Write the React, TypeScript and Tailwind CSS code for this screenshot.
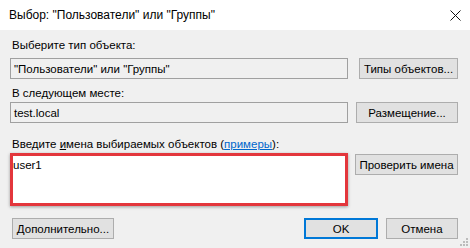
import React from "react";

const font = { fontFamily: '"Segoe UI", "Liberation Sans", Arial, sans-serif' };

function Btn({ children, className = "" }: { children: React.ReactNode; className?: string }) {
  return (
    <div
      className={`flex h-[21px] shrink-0 items-center justify-center whitespace-nowrap border border-[#adadad] bg-[#e1e1e1] text-black ${className}`}
    >
      {children}
    </div>
  );
}

export default function App() {
  return (
    <div className="relative h-[248px] w-[470px] overflow-hidden bg-[#f0f0f0] text-[11.5px] leading-[12px] text-black" style={font}>
      <div className="flex h-[30px] items-center justify-between bg-white pl-[9px] pr-[8px]">
        <span className="text-[12px]">Выбор: "Пользователи" или "Группы"</span>
        <svg width="11" height="11" viewBox="0 0 11 11" className="mr-[1px]">
          <path d="M0.5 0.5 L10.5 10.5 M10.5 0.5 L0.5 10.5" stroke="#111" strokeWidth="1" />
        </svg>
      </div>

      <div className="flex flex-col pl-[10px] pr-[12px]">
        <div className="mt-[9px] pl-[2px]">Выберите тип объекта:</div>
        <div className="mt-[7px] flex items-center justify-between">
          <div className="flex h-[21px] w-[338px] shrink-0 items-center border border-[#a0a0a0] bg-[#f0f0f0] pl-[3px]">"Пользователи" или "Группы"</div>
          <Btn className="w-[99px]">Типы объектов...</Btn>
        </div>

        <div className="mt-[8px] pl-[2px]">В следующем месте:</div>
        <div className="mt-[3px] flex items-center justify-between">
          <div className="flex h-[21px] w-[338px] shrink-0 items-center border border-[#a0a0a0] bg-[#f0f0f0] pl-[3px]">test.local</div>
          <Btn className="w-[102px]">Размещение...</Btn>
        </div>

        <div className="mt-[15px] whitespace-nowrap pl-[2px]">
          Введите <span className="underline">и</span>мена выбираемых объектов (<span className="text-[#0066cc] underline">примеры</span>):
        </div>
        <div className="mt-[3px] flex items-start justify-between">
          <div className="relative h-[53px] w-[338px] shrink-0 border border-[#a0a0a0] bg-white pl-[2px] pt-[5px]">
            user1
            <div className="absolute -left-[1px] -top-[1px] h-[53px] w-[338px] border-[3px] border-[#e3363c] shadow-[0_1px_3px_rgba(0,0,0,0.35)]" />
          </div>
          <Btn className="mt-[1px] w-[103px]">Проверить имена</Btn>
        </div>

        <div className="mt-[12px] flex items-center">
          <Btn className="ml-[2px] w-[102px]">Дополнительно...</Btn>
          <div className="flex-1" />
          <div className="flex h-[21px] w-[74px] shrink-0 items-center justify-center border-2 border-[#0078d7] bg-[#e1e1e1]">OK</div>
          <Btn className="ml-[8px] w-[72px]">Отмена</Btn>
        </div>
      </div>

      <svg width="9" height="9" viewBox="0 0 9 9" className="absolute bottom-[2px] right-[2px]">
        <g fill="#bcbcbc">
          <rect x="7" y="1" width="2" height="2" />
          <rect x="4" y="4" width="2" height="2" />
          <rect x="7" y="4" width="2" height="2" />
          <rect x="1" y="7" width="2" height="2" />
          <rect x="4" y="7" width="2" height="2" />
          <rect x="7" y="7" width="2" height="2" />
        </g>
      </svg>
    </div>
  );
}
